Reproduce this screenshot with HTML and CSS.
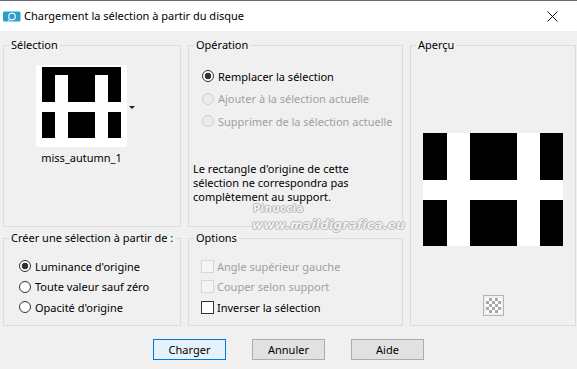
FILE: index.html
```html
<!DOCTYPE html>
<html lang="fr">
<head>
<meta charset="utf-8">
<title>Chargement la sélection à partir du disque</title>
<link rel="stylesheet" href="styles.css">
</head>
<body>
<div class="window">
  <div class="titlebar">
    <svg class="app-icon" width="18" height="11" viewBox="0 0 18 11">
      <rect x="0" y="0.5" width="17.5" height="10" rx="1.5" fill="#2a9fc9"/>
      <circle cx="9" cy="5.5" r="3.3" fill="none" stroke="#e8f6fb" stroke-width="1.2"/>
      <path d="M6.5 8.5 L5 10.5" stroke="#e8f6fb" stroke-width="1.1"/>
    </svg>
    <span class="title">Chargement la sélection à partir du disque</span>
    <svg class="close" width="11" height="11" viewBox="0 0 11 11">
      <path d="M0.5 0.5 L10.5 10.5 M10.5 0.5 L0.5 10.5" stroke="#111" stroke-width="1"/>
    </svg>
  </div>

  <div class="content">
    <div class="groups">
      <fieldset class="grp g-sel">
        <legend>Sélection</legend>
        <div class="thumb-wrap">
          <div class="thumb-row">
            <svg class="thumb" width="91" height="82" viewBox="0 0 91 82">
              <rect x="0" y="0" width="91" height="82" fill="#fff"/>
              <rect x="6" y="2" width="79" height="71" fill="#000"/>
              <rect x="19" y="10" width="13" height="63" fill="#fff"/>
              <rect x="59" y="10" width="13" height="63" fill="#fff"/>
              <rect x="6" y="37" width="79" height="10" fill="#fff"/>
            </svg>
            <span class="dd-arrow"></span>
          </div>
          <div class="thumb-label">miss_autumn_1</div>
        </div>
      </fieldset>

      <fieldset class="grp g-op">
        <legend>Opération</legend>
        <div class="op-list">
          <label class="opt"><span class="radio checked"></span>Remplacer la sélection</label>
          <label class="opt disabled"><span class="radio"></span>Ajouter à la sélection actuelle</label>
          <label class="opt disabled"><span class="radio"></span>Supprimer de la sélection actuelle</label>
        </div>
        <p class="note">Le rectangle d'origine de cette<br>sélection ne correspondra pas<br>complètement au support.</p>
      </fieldset>

      <fieldset class="grp g-prev">
        <legend>Aperçu</legend>
        <div class="prev-body">
          <svg class="preview" width="140" height="113" viewBox="0 0 140 113">
            <rect x="0" y="0" width="140" height="113" fill="#fff"/>
            <rect x="0" y="0" width="24" height="47" fill="#000"/>
            <rect x="47" y="0" width="47" height="47" fill="#000"/>
            <rect x="117" y="0" width="23" height="47" fill="#000"/>
            <rect x="0" y="67" width="24" height="46" fill="#000"/>
            <rect x="47" y="67" width="47" height="46" fill="#000"/>
            <rect x="117" y="67" width="23" height="46" fill="#000"/>
          </svg>
          <span class="checker"></span>
        </div>
      </fieldset>

      <fieldset class="grp g-create">
        <legend>Créer une sélection à partir de :</legend>
        <div class="create-list">
          <label class="opt"><span class="radio checked"></span>Luminance d'origine</label>
          <label class="opt"><span class="radio"></span>Toute valeur sauf zéro</label>
          <label class="opt"><span class="radio"></span>Opacité d'origine</label>
        </div>
      </fieldset>

      <fieldset class="grp g-opt">
        <legend>Options</legend>
        <div class="check-list">
          <label class="opt disabled"><span class="check"></span>Angle supérieur gauche</label>
          <label class="opt disabled"><span class="check"></span>Couper selon support</label>
          <label class="opt"><span class="check"></span>Inverser la sélection</label>
        </div>
      </fieldset>
    </div>

    <div class="buttons">
      <button class="btn default">Charger</button>
      <button class="btn">Annuler</button>
      <button class="btn">Aide</button>
    </div>
  </div>

  <div class="watermark">
    <span class="wm-name">Pinuccia</span>
    <span class="wm-url">www.maildigrafica.eu</span>
  </div>
</div>
</body>
</html>
```

FILE: styles.css
```css
* { box-sizing: border-box; }

html, body {
  margin: 0;
  padding: 0;
}

body {
  width: 577px;
  height: 369px;
  overflow: hidden;
  background: #f0f0f0;
  font-family: "Noto Sans", "DejaVu Sans", sans-serif;
  font-size: 11px;
  color: #000;
}

.window {
  position: relative;
  width: 577px;
  height: 369px;
  display: flex;
  flex-direction: column;
}

/* Title bar */
.titlebar {
  height: 31px;
  flex: none;
  background: #fff;
  border-top: 1px solid #6b6b6b;
  display: flex;
  align-items: center;
  padding: 0 19px 0 3px;
}

.app-icon {
  flex: none;
  margin-right: 3px;
}

.title {
  flex: 1;
  font-size: 11px;
  line-height: 16px;
  color: #000;
}

.close {
  flex: none;
}

/* Content */
.content {
  padding: 7px 1px 0 3px;
}

.groups {
  display: grid;
  grid-template-columns: 178px 215px 166px;
  grid-template-rows: 189px 95px;
  column-gap: 7px;
  row-gap: 4px;
}

.grp {
  margin: 0;
  padding: 0;
  min-width: 0;
  border: 1px solid #dcdcdc;
}

.grp legend {
  margin-left: 5px;
  padding: 0 2px;
  height: 14px;
  line-height: 14px;
}

.g-sel { grid-column: 1; grid-row: 1; }
.g-op { grid-column: 2; grid-row: 1; }
.g-prev { grid-column: 3; grid-row: 1 / span 2; }
.g-create { grid-column: 1; grid-row: 2; }
.g-opt { grid-column: 2; grid-row: 2; }

/* Sélection */
.thumb-wrap {
  margin: 13px 0 0 32px;
  width: 91px;
}

.thumb-row {
  display: flex;
  align-items: center;
  gap: 2px;
  width: 100px;
}

.thumb {
  display: block;
  flex: none;
}

.dd-arrow {
  width: 0;
  height: 0;
  border-left: 3px solid transparent;
  border-right: 3px solid transparent;
  border-top: 3px solid #222;
  margin-top: 2px;
}

.thumb-label {
  margin-top: 4px;
  text-align: center;
  line-height: 14px;
  white-space: nowrap;
}

/* Options rows */
.opt {
  display: flex;
  align-items: center;
  gap: 4px;
  white-space: nowrap;
}

.opt.disabled {
  color: #a0a0a0;
}

.radio {
  flex: none;
  width: 12px;
  height: 12px;
  border-radius: 50%;
  border: 1px solid #333;
  background: #fff;
}

.radio.checked {
  background: radial-gradient(circle, #333 0 3px, #fff 3.6px);
}

.opt.disabled .radio {
  border-color: #cfcfcf;
  background: #ececec;
}

.check {
  flex: none;
  width: 13px;
  height: 13px;
  border: 1px solid #333;
  background: #fff;
}

.opt.disabled .check {
  border-color: #d6d6d6;
  background: #f5f5f5;
}

/* Opération */
.op-list {
  padding: 13px 0 0 13px;
}

.op-list .opt {
  height: 22.5px;
}

.note {
  margin: 29px 0 0 4px;
  line-height: 14px;
}

/* Aperçu */
.prev-body {
  display: flex;
  flex-direction: column;
  align-items: center;
  padding-top: 81px;
}

.preview {
  display: block;
}

.checker {
  margin-top: 49px;
  width: 21px;
  height: 21px;
  border: 1px solid #b4b4b4;
  background-color: #f4f4f4;
  background-image:
    conic-gradient(#a8a8a8 25%, #fff 0 50%, #a8a8a8 0 75%, #fff 0);
  background-size: 6px 6px;
  background-position: 2px 2px;
  background-repeat: repeat;
  background-clip: content-box;
  padding: 2px;
}

/* Créer / Options */
.create-list {
  padding: 11px 0 0 15px;
}

.create-list .opt,
.check-list .opt {
  height: 20.5px;
}

.check-list {
  padding: 11px 0 0 12px;
}

.check-list .opt {
  gap: 3px;
}

/* Buttons */
.buttons {
  display: flex;
  justify-content: center;
  gap: 26px;
  margin-top: 13px;
  padding-right: 2px;
}

.btn {
  width: 73px;
  height: 21px;
  padding: 0;
  margin: 0;
  border: 1px solid #adadad;
  background: #e1e1e1;
  font: inherit;
  color: #000;
  line-height: 19px;
}

.btn.default {
  border-color: #0078d7;
  background: #e5f1fb;
}

/* Watermark overlay */
.watermark {
  position: absolute;
  left: 252px;
  top: 203px;
  pointer-events: none;
  display: flex;
  flex-direction: column;
  align-items: flex-start;
  font-family: "DejaVu Sans", sans-serif;
  font-weight: bold;
  color: rgba(255, 255, 255, 0.9);
  text-shadow:
    1px 0 0 rgba(150, 150, 150, 0.55),
    -1px 0 0 rgba(150, 150, 150, 0.55),
    0 1px 0 rgba(150, 150, 150, 0.55),
    0 -1px 0 rgba(150, 150, 150, 0.55);
}

.wm-name {
  margin-left: 1px;
  font-size: 10px;
  line-height: 12px;
  letter-spacing: 0.5px;
}

.wm-url {
  margin-top: 3px;
  font-size: 12px;
  line-height: 14px;
  font-style: italic;
  letter-spacing: 0.3px;
}
```
